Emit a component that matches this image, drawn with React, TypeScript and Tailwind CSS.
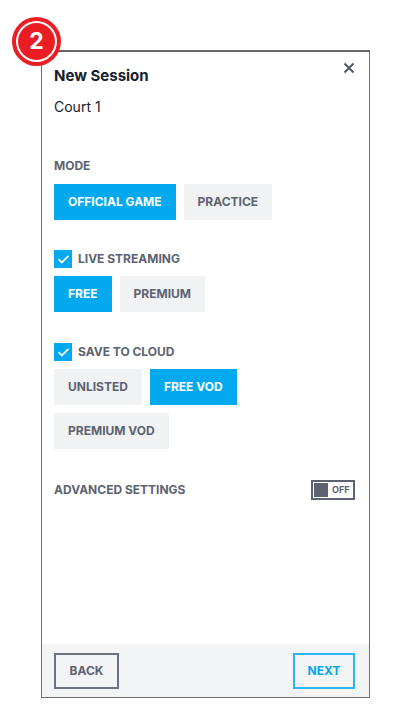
import { useState } from "react";

function Choice({ label, active }: { label: string; active?: boolean }) {
  return (
    <button
      className={
        active
          ? "h-9 px-[14px] bg-[#03a9ee] text-white text-[12px] font-bold"
          : "h-9 px-[14px] bg-[#f1f2f4] text-[#5c6370] text-[12px] font-bold"
      }
    >
      {label}
    </button>
  );
}

function Check({ label }: { label: string }) {
  return (
    <div className="flex items-center gap-[6px] h-[18px]">
      <span className="w-[18px] h-[18px] bg-[#03a9ee] flex items-center justify-center">
        <svg width="13" height="13" viewBox="0 0 24 24" fill="none" stroke="white" strokeWidth="3.2" strokeLinecap="square">
          <path d="M4 12.5l5 5L20 6.5" />
        </svg>
      </span>
      <span className="text-[12px] font-bold text-[#5c6370]">{label}</span>
    </div>
  );
}

export default function App() {
  const [advanced] = useState(false);

  return (
    <div className="w-[396px] h-[704px] bg-white font-['Inter',sans-serif] relative">
      {/* step badge */}
      <div className="absolute left-[12px] top-[17px] w-[49px] h-[49px] rounded-full bg-[#ea1d25] flex items-center justify-center z-10">
        <div className="w-[41px] h-[41px] rounded-full bg-white flex items-center justify-center">
          <div className="w-[37px] h-[37px] rounded-full bg-[#ea1d25] flex items-center justify-center text-white text-[23px] font-bold">
            2
          </div>
        </div>
      </div>

      <div className="absolute left-[41px] top-[50px] w-[329px] h-[648px] border border-[#707070] border-t-[2px] border-t-[#666] flex flex-col">
        <div className="flex-1 pl-[12px] pr-[14px] pt-[14px] relative">
          <button className="absolute right-[14px] top-[10px] text-[#4b5563]">
            <svg width="12" height="12" viewBox="0 0 12 12" stroke="currentColor" strokeWidth="1.8">
              <path d="M1.5 1.5l9 9M10.5 1.5l-9 9" />
            </svg>
          </button>
          <h2 className="text-[15px] leading-[20px] font-bold text-[#17202e]">New Session</h2>
          <p className="mt-[11px] text-[14px] leading-[20px] text-[#17202e]">Court 1</p>

          <div className="mt-[41px] text-[12px] leading-[16px] font-bold text-[#5c6370]">MODE</div>
          <div className="mt-[10px] flex gap-2">
            <Choice label="OFFICIAL GAME" active />
            <Choice label="PRACTICE" />
          </div>

          <div className="mt-[30px]">
            <Check label="LIVE STREAMING" />
          </div>
          <div className="mt-[8px] flex gap-2">
            <Choice label="FREE" active />
            <Choice label="PREMIUM" />
          </div>

          <div className="mt-[31px]">
            <Check label="SAVE TO CLOUD" />
          </div>
          <div className="mt-[8px] flex flex-wrap gap-2 w-[200px]">
            <Choice label="UNLISTED" />
            <Choice label="FREE VOD" active />
            <Choice label="PREMIUM VOD" />
          </div>

          <div className="mt-[31px] flex items-center justify-between">
            <span className="text-[12px] font-bold text-[#5c6370]">ADVANCED SETTINGS</span>
            <div className="w-[44px] h-[20px] border-2 border-[#5c6370] flex items-center pl-[1px] gap-[4px]">
              <span className="w-[14px] h-[14px] bg-[#5c6370]" />
              <span className="text-[9px] font-bold text-[#5c6370]">{advanced ? "ON" : "OFF"}</span>
            </div>
          </div>
        </div>

        <div className="h-[53px] bg-[#f3f4f6] pl-[12px] pr-[14px] flex items-center justify-between">
          <button className="h-9 w-[65px] border-2 border-[#6b7280] text-[12px] font-bold text-[#5c6370]">
            BACK
          </button>
          <button className="h-9 w-[62px] border-2 border-[#2bb5f2] text-[12px] font-bold text-[#03a9ee]">
            NEXT
          </button>
        </div>
      </div>
    </div>
  );
}
